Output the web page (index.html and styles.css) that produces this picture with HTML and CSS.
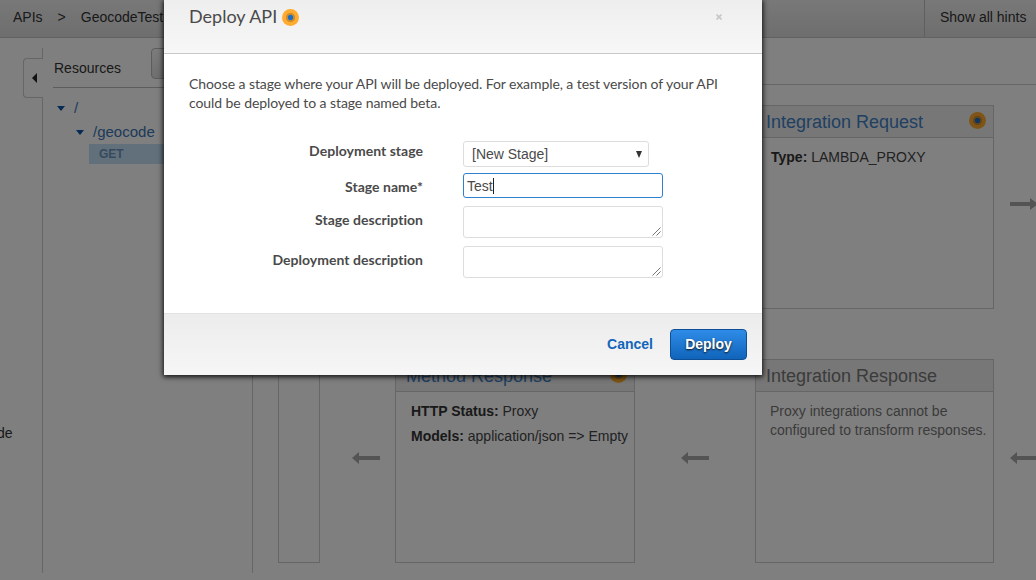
FILE: index.html
```html
<!DOCTYPE html>
<html lang="en">
<head>
<meta charset="utf-8">
<title>Deploy API</title>
<link rel="stylesheet" href="styles.css">
</head>
<body>
<div class="page">
  <header class="topbar">
    <nav class="crumbs"><span>APIs</span><span class="sep">&gt;</span><span>GeocodeTest</span></nav>
    <div class="hints">Show all hints</div>
  </header>
  <main class="workspace">
    <aside class="rail">
      <div class="rail-edge"></div>
      <div class="rail-tab"><svg width="5" height="10" viewBox="0 0 5 10"><path d="M5 0v10L0 5z" fill="#222"/></svg></div>
      <div class="rail-body"><span class="rail-item">de</span></div>
    </aside>
    <section class="resources">
      <div class="resources-head"><span>Resources</span><div class="actions"></div></div>
      <div class="tree-row"><i class="caret"></i><span>/</span></div>
      <div class="tree-row child"><i class="caret"></i><span>/geocode</span></div>
      <div class="tree-method">GET</div>
    </section>
    <section class="content">
      <div class="content-head"></div>
      <div class="flow">
        <div class="client"></div>
        <div class="lane">
          <div class="arrow-cell first"></div>
          <article class="card"><h2 class="card-head link">Method Request</h2></article>
          <div class="arrow-cell"></div>
          <article class="card narrow">
            <h2 class="card-head link">Integration Request<i class="hint-dot"></i></h2>
            <div class="card-body"><p><b>Type:</b> LAMBDA_PROXY</p></div>
          </article>
          <div class="arrow-cell last"><svg width="28" height="12" viewBox="0 0 28 12"><path d="M0 4h20V0l8 6-8 6V8H0z"/></svg></div>
        </div>
        <div class="lane">
          <div class="arrow-cell first"><svg width="28" height="12" viewBox="0 0 28 12"><path d="M28 4H7V0L0 6l7 6V8h21z"/></svg></div>
          <article class="card">
            <h2 class="card-head link">Method Response<i class="hint-dot"></i></h2>
            <div class="card-body"><p><b>HTTP Status:</b> Proxy</p><p><b>Models:</b> application/json =&gt; Empty</p></div>
          </article>
          <div class="arrow-cell"><svg width="28" height="12" viewBox="0 0 28 12"><path d="M28 4H7V0L0 6l7 6V8h21z"/></svg></div>
          <article class="card narrow">
            <h2 class="card-head muted">Integration Response</h2>
            <div class="card-body note">Proxy integrations cannot be<br>configured to transform responses.</div>
          </article>
          <div class="arrow-cell last"><svg width="28" height="12" viewBox="0 0 28 12"><path d="M28 4H7V0L0 6l7 6V8h21z"/></svg></div>
        </div>
      </div>
    </section>
  </main>
</div>
<div class="overlay"></div>
<div class="modal" role="dialog">
  <div class="modal-head">
    <h1>Deploy API</h1><i class="hint-dot"></i>
    <svg class="close" width="6" height="6" viewBox="0 0 6 6"><path d="M.5.5l5 5M5.5.5l-5 5" stroke="#c8c8c8" stroke-width="1.7"/></svg>
  </div>
  <div class="modal-body">
    <p>Choose a stage where your API will be deployed. For example, a test version of your API<br>could be deployed to a stage named beta.</p>
    <div class="form">
      <label class="row-stage">Deployment stage</label>
      <div class="select"><span>[New Stage]</span><svg width="6" height="7" viewBox="0 0 6 7"><path d="M0 0h6L3 7z" fill="#333"/></svg></div>
      <label class="row-name">Stage name*</label>
      <div class="input">Test<i class="cursor"></i></div>
      <label class="row-area">Stage description</label>
      <div class="area"><svg width="9" height="9" viewBox="0 0 9 9"><path d="M.5 8.5l8-8M4.5 8.5l4-4" stroke="#777"/></svg></div>
      <label class="row-area">Deployment description</label>
      <div class="area"><svg width="9" height="9" viewBox="0 0 9 9"><path d="M.5 8.5l8-8M4.5 8.5l4-4" stroke="#777"/></svg></div>
    </div>
  </div>
  <div class="modal-foot"><span class="cancel">Cancel</span><span class="deploy">Deploy</span></div>
</div>
</body>
</html>
```
FILE: styles.css
```css
* { box-sizing: border-box; }
body { margin: 0; width: 1036px; height: 580px; overflow: hidden; position: relative; font: 14px/20px "Liberation Sans", Arial, sans-serif; color: #444; background: #fff; }
h1, h2, p { margin: 0; font-weight: normal; }
svg { display: block; }
.page { height: 580px; overflow: hidden; }

.topbar { height: 38px; display: flex; justify-content: space-between; background: linear-gradient(#f1f1f1, #dcdcdc); border-bottom: 1px solid #c4c4c4; color: #333; line-height: 35px; }
.crumbs { display: flex; padding-left: 13px; }
.crumbs .sep { padding: 0 15px 0 15px; }
.hints { width: 112px; padding-left: 15px; border-left: 1px solid #bebebe; white-space: nowrap; }

.workspace { display: flex; height: 535px; padding-top: 10px; }
.rail { width: 43px; flex: none; display: flex; flex-direction: column; }
.rail-edge { height: 10px; border-right: 1px solid #ccc; }
.rail-tab { width: 20px; height: 40px; margin-left: 23px; border: 1px solid #ccc; border-right: 0; border-radius: 4px 0 0 4px; display: flex; align-items: center; padding-left: 8px; }
.rail-body { flex: 1; border-right: 1px solid #ccc; padding-top: 325px; color: #333; }
.rail-item { margin-left: -3px; }

.resources { width: 210px; flex: none; padding-left: 10px; border-right: 1px solid #ccc; }
.resources-head { height: 40px; border-bottom: 1px solid #bbb; display: flex; justify-content: space-between; color: #333; line-height: 40px; padding-left: 1px; }
.actions { width: 101px; height: 31px; border: 1px solid #bbb; border-radius: 4px; background: linear-gradient(#f8f8f8, #ddd); }
.tree-row { display: flex; align-items: center; height: 24px; padding-left: 4px; color: #3a75b5; font-size: 15px; }
.resources-head + .tree-row { margin-top: 8px; }
.tree-row span { padding-left: 9px; }
.tree-row.child { padding-left: 23px; }
.caret { border: 4px solid transparent; border-top: 5px solid #0b55a8; border-bottom: 0; width: 8px; }
.tree-method { margin-left: 36px; height: 20px; background: #c5e0f8; padding-left: 10px; font: bold 12px/20px "Liberation Sans", Arial, sans-serif; color: #6d94ba; }

.content { flex: 1; min-width: 0; }
.content-head { height: 37px; border-bottom: 1px solid #ccc; }
.flow { display: grid; grid-template: 204px 204px / 42px 1fr; row-gap: 50px; padding: 20px 0 0 25px; }
.client { grid-row: 1 / 3; border: 1px solid #ccc; }
.lane { display: flex; min-width: 0; overflow: hidden; }
.arrow-cell { width: 120px; flex: none; padding: 93px 0 0 46px; }
.arrow-cell.first { width: 75px; padding-left: 32px; }
.arrow-cell.last { width: 60px; padding-left: 16px; }
.arrow-cell path { fill: #a8a8a8; }
.card { width: 240px; flex: none; border: 1px solid #ccc; }
.card.narrow { width: 239px; }
.card-head { height: 32px; padding: 1px 7px 0 10px; display: flex; align-items: center; justify-content: space-between; border-bottom: 1px solid #ccc; background: #eee; font-size: 18px; }
.card-head .hint-dot { margin-top: -3px; }
.link { color: #3f81c6; }
.muted { color: #777; }
.card-body { padding: 9px 0 0 15px; white-space: nowrap; }
.card-body p { margin-bottom: 5px; }
.card-body b { color: #333; }
.card-body.note { padding: 10px 0 0 14px; line-height: 19px; color: #777; }
.hint-dot { width: 17px; height: 17px; border-radius: 50%; background: radial-gradient(circle, #1a6fc4 0 2.4px, #c98a34 3px 4.2px, #ffab2e 5px); flex: none; }

.overlay { position: absolute; inset: 0; background: rgba(0, 0, 0, .5); }

.modal { position: absolute; left: 164px; top: 0; width: 598px; height: 375px; background: #fff; box-shadow: 0 1px 5px 1px rgba(0, 0, 0, .85); font-family: Lato, sans-serif; color: #4a4a4a; display: flex; flex-direction: column; }
.modal-head { height: 54px; display: flex; padding: 4px 40px 0 25px; background: linear-gradient(#eee, #f7f7f7); border-bottom: 1px solid #c8c8c8; }
.modal-head h1 { font-size: 18px; line-height: 24px; }
.modal-head .hint-dot { margin: 5px 0 0 5px; }
.close { margin: 10px 0 0 auto; }
.modal-body { flex: 1; padding: 20px 25px 0; }
.modal-body p { line-height: 19px; white-space: nowrap; letter-spacing: -.08px; }
.form { display: grid; grid-template-columns: 234px 200px; column-gap: 40px; row-gap: 8px; margin-top: 29px; }
.form label { text-align: right; font-weight: bold; letter-spacing: .03px; }
.select { width: 186px; height: 26px; border: 1px solid #ddd; border-radius: 3px; display: flex; align-items: center; justify-content: space-between; padding: 0 6px 0 8px; font-family: "Liberation Sans", Arial, sans-serif; margin-bottom: -2px; }
.input { height: 25px; border: 1px solid #2f80d0; border-radius: 3px; display: flex; align-items: center; padding-left: 3px; font-family: "Liberation Sans", Arial, sans-serif; }
.cursor { width: 1px; height: 16px; background: #222; }
.area { height: 32px; border: 1px solid #ddd; border-radius: 3px; display: flex; align-items: flex-end; justify-content: flex-end; padding: 0 1px 1px 0; }
.row-name { padding-top: 4px; }
.row-area { padding-top: 4px; }
.modal-foot { height: 62px; border-top: 1px solid #e2e2e2; background: linear-gradient(#ececec, #f6f6f6); display: flex; justify-content: flex-end; align-items: center; gap: 17px; padding-right: 15px; font: bold 14px/29px "Liberation Sans", Arial, sans-serif; }
.cancel { color: #1166bb; }
.deploy { width: 77px; height: 31px; text-align: center; color: #fff; border: 1px solid #0c4f96; border-radius: 4px; background: linear-gradient(#2e8ce8, #1064ba); text-shadow: 0 1px 2px #111; }
```
